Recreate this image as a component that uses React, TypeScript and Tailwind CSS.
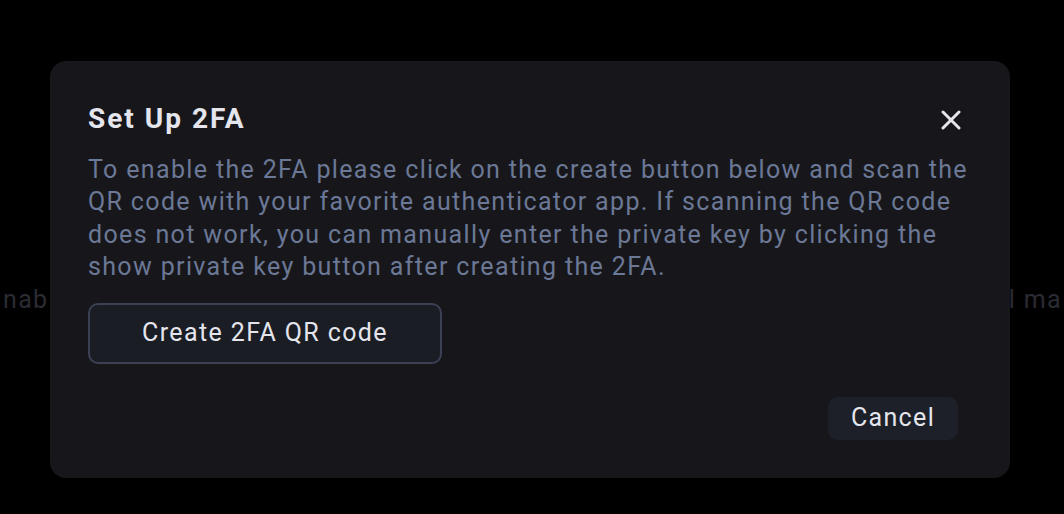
import React from "react";

export default function App() {
  return (
    <div
      className="relative w-[1064px] h-[514px] overflow-hidden bg-black"
      style={{ fontFamily: "Roboto, 'Noto Sans', sans-serif" }}
    >
      {/* background page text */}
      <div className="flex justify-between items-center pt-[284px] text-[25px] leading-[32px] tracking-[1.35px] text-[#2a2b33]">
        <span className="ml-[3px]">nab</span>
        <span className="mr-[2px]">l ma</span>
      </div>

      {/* modal */}
      <div className="absolute left-[50px] top-[61px] w-[960px] h-[417px] rounded-[16px] bg-[#17171b] pl-[38px] pr-[38px] pt-[39px] flex flex-col">
        <div className="flex items-start justify-between">
          <h2 className="text-[28px] leading-[38px] font-bold tracking-[2px] text-[#e4e5ed]">Set Up 2FA</h2>
          <button className="mt-[10px] mr-[11px] w-[20px] h-[20px] flex items-center justify-center">
            <svg width="20" height="20" viewBox="0 0 20 20" fill="none">
              <path d="M2 2L18 18M18 2L2 18" stroke="#e4e5ed" strokeWidth="3" strokeLinecap="round" />
            </svg>
          </button>
        </div>
        <p className="mt-[16px] text-[25px] leading-[32.4px] tracking-[1.35px] text-[#6b7896]">
          To enable the 2FA please click on the create button below and scan the QR code with your favorite authenticator app. If scanning the QR code does not work, you can manually enter the private key by clicking the show private key button after creating the 2FA.
        </p>
        <div className="mt-[19px]">
          <button className="w-[354px] h-[61px] rounded-[10px] border-2 border-[#3b4054] bg-[#1b1d25] text-[25px] tracking-[1.4px] text-[#e4e5ed]">
            Create 2FA QR code
          </button>
        </div>
        <div className="mt-[33px] flex justify-end pr-[14px]">
          <button className="w-[130px] h-[43px] rounded-[10px] bg-[#1d2028] text-[25px] tracking-[1.35px] text-[#e4e5ed]">
            Cancel
          </button>
        </div>
      </div>
    </div>
  );
}
